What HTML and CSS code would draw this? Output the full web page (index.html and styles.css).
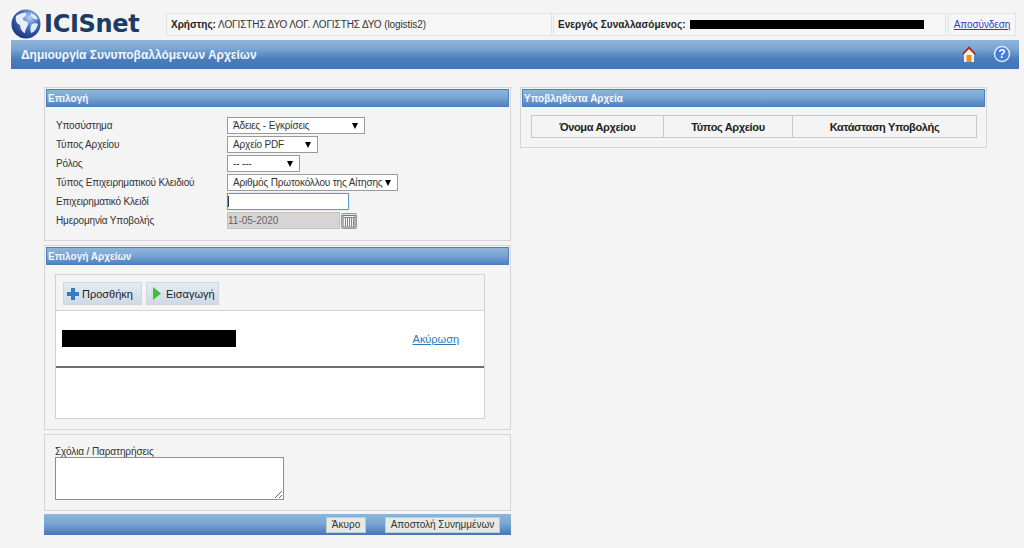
FILE: index.html
```html
<!DOCTYPE html>
<html lang="el">
<head>
<meta charset="utf-8">
<title>Δημιουργία Συνυποβαλλόμενων Αρχείων</title>
<link rel="stylesheet" href="styles.css">
</head>
<body>
<header class="top">
  <div class="logo">
    <svg class="globe" width="34" height="30" viewBox="0 0 34 30">
      <defs>
        <radialGradient id="g" cx="0.62" cy="0.28" r="0.85">
          <stop offset="0" stop-color="#b9d2f2"/>
          <stop offset="0.4" stop-color="#3f6cc0"/>
          <stop offset="1" stop-color="#10296e"/>
        </radialGradient>
      </defs>
      <circle cx="17" cy="15" r="14.500" fill="url(#g)"/>
      <path d="M7 7c3-2 8-4 10-3 1 2-1 4-3 5-1 2 2 3 5 4 1 3-3 7-3 11-2 0-5-4-5-8-3-1-5-4-4-9z" fill="#e8eef8"/>
      <path d="M22 4c3 1 6 3 7 6-2 1-4 0-5-1-2-1-3-3-2-5zM23 15c2-1 5-1 6 0-1 4-3 8-7 9-1-3-1-7 1-9z" fill="#dfe8f5"/>
    </svg>
    <span class="logo-text">ICISnet</span>
  </div>
  <div class="info info-user"><b>Χρήστης:</b> ΛΟΓΙΣΤΗΣ ΔΥΟ ΛΟΓ. ΛΟΓΙΣΤΗΣ ΔΥΟ (logistis2)</div>
  <div class="info info-active"><b>Ενεργός Συναλλασόμενος:</b><span class="redact-top"></span></div>
  <div class="info info-logout"><a href="#">Αποσύνδεση</a></div>
</header>

<div class="titlebar">
  <h1>Δημιουργία Συνυποβαλλόμενων Αρχείων</h1>
  <div class="title-icons">
    <svg width="18" height="18" viewBox="0 0 18 18">
      <path d="M9 1 1.500 9H4v8h10V9h2.500z" fill="#f7f3ea"/>
      <path d="M9 1 1.500 9l2 .5L9 4l5.500 5.500 2-.5z" fill="#a52a1e"/>
      <rect x="6.500" y="10" width="5" height="7" fill="#e8940e"/>
    </svg>
    <svg width="18" height="18" viewBox="0 0 18 18">
      <circle cx="9" cy="9" r="7.500" fill="#3f7fdc" stroke="#dce8f8" stroke-width="1.500"/>
      <text x="9" y="13" text-anchor="middle" class="help-q">?</text>
    </svg>
  </div>
</div>

<main class="columns">
  <div class="col-left">
    <section class="panel panel-select">
      <h2 class="panel-head">Επιλογή</h2>
      <div class="form-grid">
        <label>Υποσύστημα</label>
        <div><select class="sel w-sub"><option>Άδειες - Εγκρίσεις</option></select></div>
        <label>Τύπος Αρχείου</label>
        <div><select class="sel w-type"><option>Αρχείο PDF</option></select></div>
        <label>Ρόλος</label>
        <div><select class="sel w-role"><option>-- ---</option></select></div>
        <label>Τύπος Επιχειρηματικού Κλειδιού</label>
        <div><select class="sel w-key"><option>Αριθμός Πρωτοκόλλου της Αίτησης</option></select></div>
        <label>Επιχειρηματικό Κλειδί</label>
        <div><input class="key-input" type="text"></div>
        <label>Ημερομηνία Υποβολής</label>
        <div class="date-row">
          <input class="date-input" type="text" value="11-05-2020" disabled>
          <span class="cal">
            <svg width="14" height="14" viewBox="0 0 14 14">
              <rect x="1" y="1.500" width="12" height="11.500" fill="#f2f2f2" stroke="#777"/>
              <path d="M1 3.500h12M3.500 4v8.500M5.500 4v8.500M7.500 4v8.500M9.500 4v8.500M11.500 4v8.500" stroke="#888" fill="none"/>
            </svg>
          </span>
        </div>
      </div>
    </section>

    <section class="panel panel-files">
      <h2 class="panel-head">Επιλογή Αρχείων</h2>
      <div class="uploader">
        <div class="toolbar">
          <button class="tool tool-add" type="button">
            <svg width="12" height="12" viewBox="0 0 12 12"><path d="M4 0h4v4h4v4H8v4H4V8H0V4h4z" fill="#2f7ec4"/></svg>
            Προσθήκη
          </button>
          <button class="tool tool-import" type="button">
            <svg width="9" height="13" viewBox="0 0 9 13"><path d="M1 0l8 6.500L1 13z" fill="#3fbf3a"/></svg>
            Εισαγωγή
          </button>
        </div>
        <div class="file-row">
          <span class="redact-file"></span>
          <a class="cancel" href="#">Ακύρωση</a>
        </div>
        <div class="file-empty"></div>
      </div>
    </section>

    <section class="panel panel-notes">
      <label class="notes-label">Σχόλια / Παρατηρήσεις</label>
      <textarea class="notes"></textarea>
    </section>

    <div class="actions">
      <button class="act act-cancel" type="button">Άκυρο</button>
      <button class="act act-send" type="button">Αποστολή Συνημμένων</button>
    </div>
  </div>

  <div class="col-right">
    <section class="panel panel-submitted">
      <h2 class="panel-head">Υποβληθέντα Αρχεία</h2>
      <table class="files">
        <thead>
          <tr><th class="c1">Όνομα Αρχείου</th><th class="c2">Τύπος Αρχείου</th><th>Κατάσταση Υποβολής</th></tr>
        </thead>
      </table>
    </section>
  </div>
</main>
</body>
</html>
```
FILE: styles.css
```css
* { box-sizing: border-box; }
html, body { height: 100%; }
body {
  margin: 0;
  height: 548px;
  overflow: hidden;
  background: #f4f4f4;
  font-family: "Liberation Sans", Arial, sans-serif;
  font-size: 10px;
  color: #333;
}
.top {
  display: flex;
  align-items: flex-start;
  height: 40px;
  padding: 9px 0 0 9px;
}
.logo { display: flex; align-items: center; width: 157px; height: 29px; }
.globe { flex: none; margin-right: 1px; }
.logo-text {
  font-family: "DejaVu Sans", sans-serif;
  font-weight: 700;
  font-size: 24px;
  letter-spacing: -0.300px;
  color: #1d3c63;
  line-height: 26px;
}
.info {
  height: 23px;
  margin-top: 4px;
  margin-right: 1px;
  padding: 0 4px;
  display: flex;
  align-items: center;
  border: 1px solid #e3e3e3;
  background: #f6f6f6;
  white-space: pre;
  letter-spacing: -0.100px;
}
.info b { color: #222; letter-spacing: 0; }
.info-user { width: 386px; }
.info-active { width: 393px; margin-right: 2px; }
.info-logout { width: 68px; justify-content: center; padding: 0; }
.info-logout a { color: #2a3fc4; }
.redact-top { width: 234px; height: 9px; margin-left: 4px; background: #000; }
.titlebar {
  display: flex;
  justify-content: space-between;
  align-items: center;
  height: 29px;
  margin: 0 5px 0 11px;
  padding: 0 8px 0 10px;
  background: linear-gradient(#8fb5dc 0, #7ba6d4 30%, #4b7dbc 65%, #4473b6 100%);
}
.titlebar h1 {
  margin: 0;
  font-size: 12px;
  font-weight: 700;
  letter-spacing: -0.030px;
  color: #f2f6fb;
}
.title-icons { display: flex; gap: 15px; align-items: center; margin-top: -2px; }
.help-q { font: 700 12px "Liberation Sans", sans-serif; fill: #fff; }
.columns {
  display: flex;
  align-items: flex-start;
  gap: 9px;
  padding: 18px 0 0 44px;
}
.col-left { width: 467px; display: flex; flex-direction: column; }
.col-right { width: 467px; }
.panel {
  border: 1px solid #d6d6d6;
  background: #f4f4f4;
  padding: 1px;
}
.panel-head {
  margin: 0;
  height: 18px;
  padding-left: 1px;
  display: flex;
  align-items: center;
  font-size: 10px;
  font-weight: 700;
  color: #f4f8fc;
  border: 1px solid #4d7fbc;
  background: linear-gradient(#8db4db, #7aa6d4 45%, #4f82c0);
}
.panel-select { height: 154px; }
.form-grid {
  display: grid;
  grid-template-columns: 171px auto;
  grid-auto-rows: 19px;
  align-items: center;
  justify-content: start;
  padding: 9px 0 0 10px;
}
.form-grid label { color: #333; letter-spacing: -0.160px; }
.form-grid > div { display: flex; align-items: center; }
.sel {
  appearance: none;
  height: 17px;
  padding: 0 0 0 5px;
  border: 1px solid #9a9a9a;
  border-radius: 0;
  font: 10px "Liberation Sans", sans-serif;
  letter-spacing: -0.160px;
  color: #333;
  background: #fff url("data:image/svg+xml,%3Csvg xmlns='http://www.w3.org/2000/svg' width='8' height='6'%3E%3Cpath d='M1 0h6L4 6z' fill='%23000'/%3E%3C/svg%3E") no-repeat right 5px center;
}
.w-sub { width: 138px; }
.w-type { width: 91px; }
.w-role { width: 73px; }
.w-key { width: 171px; }
.key-input {
  width: 122px;
  height: 17px;
  padding: 0;
  border: 1px solid #5f96dc;
  border-radius: 1px;
  box-shadow: 0 0 1px #5f96dc;
  background: linear-gradient(#333, #333) no-repeat 0 2px / 1px 11px #fff;
}
.date-row { gap: 1px; }
.date-input {
  width: 113px;
  height: 17px;
  padding: 0;
  border: 1px solid #c4c0c0;
  background: #d8d4d4;
  font: 10px "Liberation Sans", sans-serif;
  color: #666;
  opacity: 1;
}
.cal {
  display: flex;
  align-items: center;
  justify-content: center;
  width: 16px;
  height: 16px;
  border: 1px solid #999;
  border-radius: 2px;
  background: #e4e4e4;
}
.panel-files { margin-top: 4px; height: 185px; }
.uploader {
  width: 430px;
  height: 145px;
  margin: 9px 0 0 9px;
  border: 1px solid #d2d2d2;
  background: #fff;
}
.toolbar {
  display: flex;
  gap: 4px;
  height: 36px;
  padding: 7px 0 0 7px;
  background: #f4f4f4;
  border-bottom: 1px solid #d2d2d2;
}
.tool {
  display: flex;
  align-items: center;
  gap: 3px;
  height: 23px;
  padding: 0 0 0 3px;
  border: 1px solid #d0d6dc;
  background: linear-gradient(#e4ebf2, #cfdae6);
  font: 11px "Liberation Sans", sans-serif;
  color: #222;
}
.tool-add { width: 79px; }
.tool-import { width: 73px; gap: 5px; padding-left: 5px; }
.file-row {
  display: flex;
  justify-content: space-between;
  align-items: center;
  height: 57px;
  padding: 0 25px 0 6px;
  border-bottom: 2px solid #6e6e6e;
}
.redact-file { width: 174px; height: 17px; background: #000; }
.cancel { font-size: 11px; letter-spacing: -0.030px; color: #2a7ab8; }
.panel-notes { margin-top: 4px; height: 77px; padding: 12px 0 0 10px; }
.notes-label { display: block; line-height: 10px; letter-spacing: -0.100px; }
.notes {
  display: block;
  width: 229px;
  height: 43px;
  margin: 0;
  border: 1px solid #8e8e8e;
  background: #fff;
}
.actions {
  display: flex;
  justify-content: flex-end;
  align-items: center;
  gap: 19px;
  height: 21px;
  margin-top: 3px;
  padding-right: 11px;
  background: linear-gradient(#8db4db, #7aa6d4 45%, #4676b8);
}
.act {
  height: 16px;
  padding: 0;
  border: 1px solid #c5cac5;
  background: #e6e9e4;
  font: 10px "Liberation Sans", sans-serif;
  color: #333;
}
.act-cancel { width: 40px; }
.act-send { width: 115px; }
.panel-submitted { height: 61px; }
.files {
  width: 446px;
  margin: 8px 0 0 9px;
  border-collapse: collapse;
  table-layout: fixed;
}
.files th {
  height: 22px;
  padding: 0;
  border: 1px solid #c8c8c8;
  background: #f4f4f4;
  font-size: 11px;
  font-weight: 700;
  letter-spacing: -0.350px;
  color: #222;
}
.files .c1 { width: 132px; }
.files .c2 { width: 129px; }
```
